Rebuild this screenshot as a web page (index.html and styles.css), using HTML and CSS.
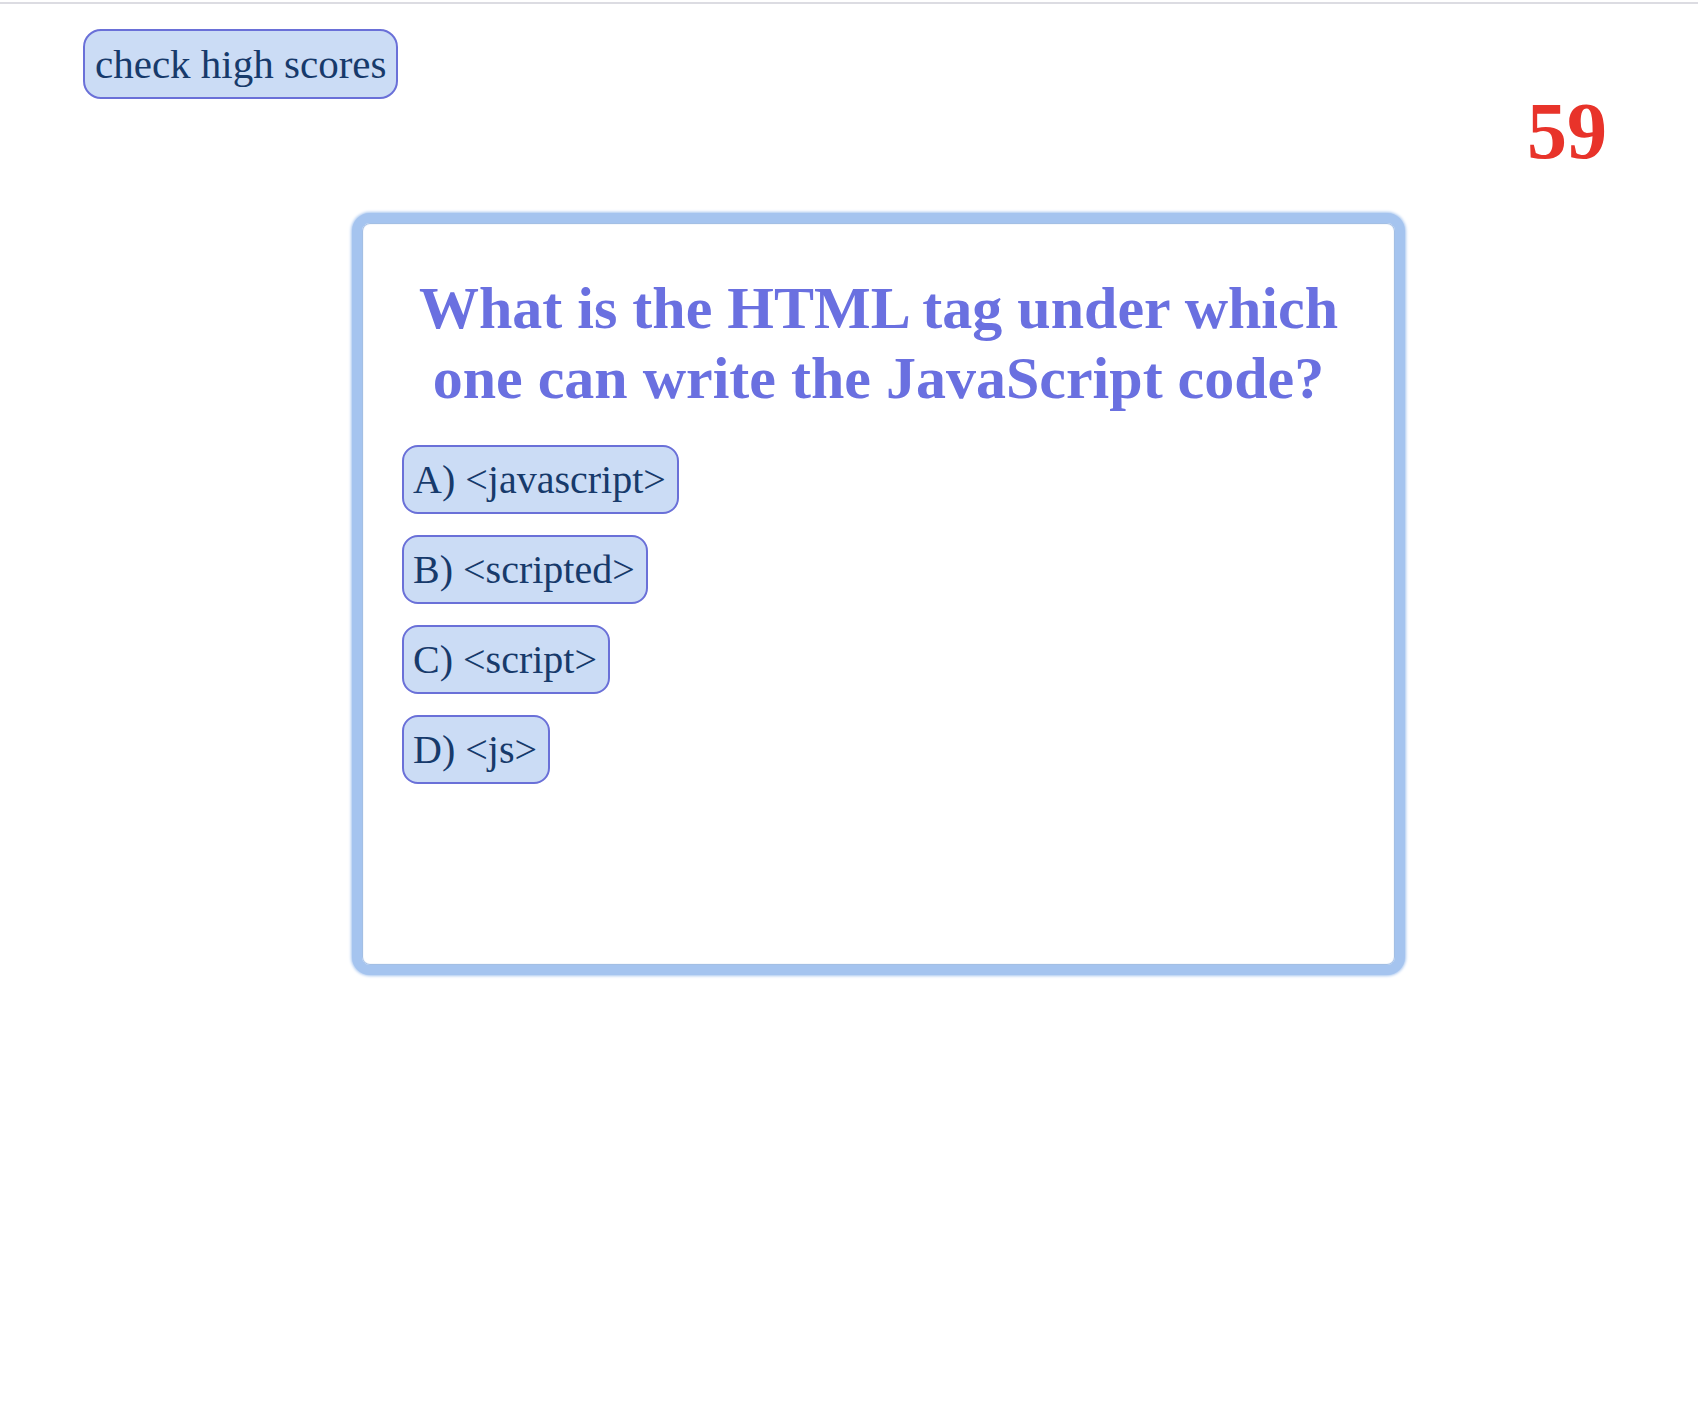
FILE: index.html
```html
<!DOCTYPE html>
<html lang="en">
<head>
<meta charset="utf-8">
<title>Quiz</title>
<link rel="stylesheet" href="styles.css">
</head>
<body>
<div class="topline"></div>
<header class="header">
  <button class="scores-btn">check high scores</button>
  <div class="timer">59</div>
</header>
<main class="card">
  <h2 class="question">What is the HTML tag under which one can write the JavaScript code?</h2>
  <div class="answers">
    <button class="answer">A) &lt;javascript&gt;</button>
    <button class="answer">B) &lt;scripted&gt;</button>
    <button class="answer">C) &lt;script&gt;</button>
    <button class="answer">D) &lt;js&gt;</button>
  </div>
</main>
</body>
</html>
```
FILE: styles.css
```css
html, body {
  margin: 0;
  padding: 0;
  background: #ffffff;
}
body {
  font-family: "Liberation Serif", "Times New Roman", serif;
  min-height: 1414px;
}
.topline {
  height: 2px;
  margin-top: 2px;
  background: #dcdce2;
}
.header {
  box-sizing: border-box;
  height: 209px;
  display: flex;
  justify-content: space-between;
  align-items: flex-start;
  padding: 0 91px 0 83px;
}
.scores-btn {
  margin-top: 25px;
  font-family: inherit;
  font-size: 41px;
  line-height: normal;
  color: #173a6b;
  background: #cbdcf5;
  border: 2px solid #6a70d8;
  border-radius: 18px;
  padding: 9px 10px;
  cursor: pointer;
}
.timer {
  margin-top: 82px;
  font-size: 80px;
  font-weight: bold;
  color: #e8332a;
  line-height: normal;
}
.card {
  box-sizing: border-box;
  margin: 0 0 0 352px;
  width: 1053px;
  height: 762px;
  border: 10px solid #a5c4ef;
  border-radius: 18px;
  box-shadow: 0 0 3px 1px #a5c4ef, inset 0 0 1px 1px #9ab8e2;
  background: #ffffff;
  padding: 50px 40px 0 40px;
}
.question {
  margin: 0;
  padding: 0;
  font-size: 60px;
  line-height: 70px;
  font-weight: bold;
  color: #6a70e0;
  text-align: center;
}
.answers {
  margin-top: 32px;
  display: flex;
  flex-direction: column;
  align-items: flex-start;
  gap: 21px;
}
.answer {
  font-family: inherit;
  font-size: 40px;
  line-height: normal;
  color: #173a6b;
  background: #cbdcf5;
  border: 2px solid #6a70d8;
  border-radius: 16px;
  padding: 9px 11px 9px 9px;
  cursor: pointer;
}
```
